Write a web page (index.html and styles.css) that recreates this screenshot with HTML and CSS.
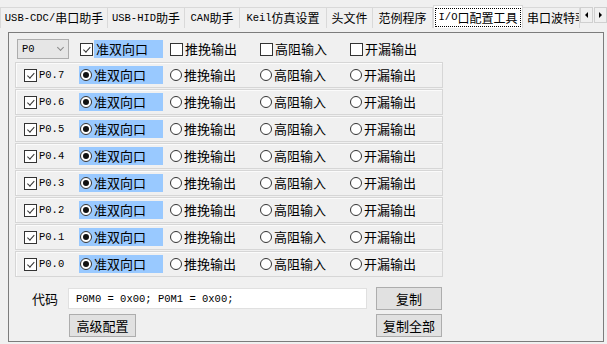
FILE: index.html
```html
<!DOCTYPE html>
<html lang="zh">
<head>
<meta charset="utf-8">
<link rel="stylesheet" href="styles.css">
</head>
<body>
<div class="tabbar">
  <div class="tabs">
    <div class="tab t1"><span class="lat">USB-CDC/</span>串口助手</div>
    <div class="tab t2"><span class="lat">USB-HID</span>助手</div>
    <div class="tab t3"><span class="lat">CAN</span>助手</div>
    <div class="tab t4"><span class="lat">Keil</span>仿真设置</div>
    <div class="tab t5">头文件</div>
    <div class="tab t6">范例程序</div>
    <div class="tab t7 active"><span class="focus"><span class="lat">I/O</span>口配置工具</span></div>
    <div class="tab t8">串口波特率</div>
  </div>
  <div class="scroll">
    <span class="sbtn"><span class="tri-l"></span></span>
    <span class="sbtn"><span class="tri-r"></span></span>
  </div>
</div>

<div class="frame">
  <div class="head grid">
    <div class="combo"><span class="lat">P0</span><span class="chev"></span></div>
    <label class="opt"><span class="cb on"></span><span class="txt hl">准双向口</span></label>
    <label class="opt"><span class="cb"></span><span class="txt">推挽输出</span></label>
    <label class="opt"><span class="cb"></span><span class="txt">高阻输入</span></label>
    <label class="opt"><span class="cb"></span><span class="txt">开漏输出</span></label>
  </div>

  <div class="rows">
    <div class="row grid2">
      <label class="opt"><span class="cb on"></span><span class="lat pin">P0.7</span></label>
      <label class="opt hlbox"><span class="rb on"></span><span class="txt">准双向口</span></label>
      <label class="opt"><span class="rb"></span><span class="txt">推挽输出</span></label>
      <label class="opt"><span class="rb"></span><span class="txt">高阻输入</span></label>
      <label class="opt"><span class="rb"></span><span class="txt">开漏输出</span></label>
    </div>
    <div class="row grid2">
      <label class="opt"><span class="cb on"></span><span class="lat pin">P0.6</span></label>
      <label class="opt hlbox"><span class="rb on"></span><span class="txt">准双向口</span></label>
      <label class="opt"><span class="rb"></span><span class="txt">推挽输出</span></label>
      <label class="opt"><span class="rb"></span><span class="txt">高阻输入</span></label>
      <label class="opt"><span class="rb"></span><span class="txt">开漏输出</span></label>
    </div>
    <div class="row grid2">
      <label class="opt"><span class="cb on"></span><span class="lat pin">P0.5</span></label>
      <label class="opt hlbox"><span class="rb on"></span><span class="txt">准双向口</span></label>
      <label class="opt"><span class="rb"></span><span class="txt">推挽输出</span></label>
      <label class="opt"><span class="rb"></span><span class="txt">高阻输入</span></label>
      <label class="opt"><span class="rb"></span><span class="txt">开漏输出</span></label>
    </div>
    <div class="row grid2">
      <label class="opt"><span class="cb on"></span><span class="lat pin">P0.4</span></label>
      <label class="opt hlbox"><span class="rb on"></span><span class="txt">准双向口</span></label>
      <label class="opt"><span class="rb"></span><span class="txt">推挽输出</span></label>
      <label class="opt"><span class="rb"></span><span class="txt">高阻输入</span></label>
      <label class="opt"><span class="rb"></span><span class="txt">开漏输出</span></label>
    </div>
    <div class="row grid2">
      <label class="opt"><span class="cb on"></span><span class="lat pin">P0.3</span></label>
      <label class="opt hlbox"><span class="rb on"></span><span class="txt">准双向口</span></label>
      <label class="opt"><span class="rb"></span><span class="txt">推挽输出</span></label>
      <label class="opt"><span class="rb"></span><span class="txt">高阻输入</span></label>
      <label class="opt"><span class="rb"></span><span class="txt">开漏输出</span></label>
    </div>
    <div class="row grid2">
      <label class="opt"><span class="cb on"></span><span class="lat pin">P0.2</span></label>
      <label class="opt hlbox"><span class="rb on"></span><span class="txt">准双向口</span></label>
      <label class="opt"><span class="rb"></span><span class="txt">推挽输出</span></label>
      <label class="opt"><span class="rb"></span><span class="txt">高阻输入</span></label>
      <label class="opt"><span class="rb"></span><span class="txt">开漏输出</span></label>
    </div>
    <div class="row grid2">
      <label class="opt"><span class="cb on"></span><span class="lat pin">P0.1</span></label>
      <label class="opt hlbox"><span class="rb on"></span><span class="txt">准双向口</span></label>
      <label class="opt"><span class="rb"></span><span class="txt">推挽输出</span></label>
      <label class="opt"><span class="rb"></span><span class="txt">高阻输入</span></label>
      <label class="opt"><span class="rb"></span><span class="txt">开漏输出</span></label>
    </div>
    <div class="row grid2">
      <label class="opt"><span class="cb on"></span><span class="lat pin">P0.0</span></label>
      <label class="opt hlbox"><span class="rb on"></span><span class="txt">准双向口</span></label>
      <label class="opt"><span class="rb"></span><span class="txt">推挽输出</span></label>
      <label class="opt"><span class="rb"></span><span class="txt">高阻输入</span></label>
      <label class="opt"><span class="rb"></span><span class="txt">开漏输出</span></label>
    </div>
  </div>

  <div class="bottom">
    <div class="lbl">代码</div>
    <div class="code"><span class="lat">P0M0 = 0x00; P0M1 = 0x00;</span></div>
    <button class="btn">复制</button>
    <button class="btn adv">高级配置</button>
    <button class="btn all">复制全部</button>
  </div>
</div>
</body>
</html>
```

FILE: styles.css
```css
html, body {
  margin: 0;
  padding: 0;
  background: #f0f0f0;
}
body {
  width: 607px;
  height: 344px;
  overflow: hidden;
  font-family: "Noto Sans CJK SC", "Noto Sans", sans-serif;
  font-size: 13px;
  color: #000;
}
.lat {
  font-family: "Liberation Mono", "DejaVu Sans Mono", monospace;
  font-size: 10.5px;
}

/* tab strip */
.tabbar {
  display: flex;
  height: 28px;
}
.tabs {
  display: flex;
  align-items: flex-end;
  width: 580px;
  overflow: hidden;
  white-space: nowrap;
}
.tab {
  box-sizing: border-box;
  height: 21px;
  flex: none;
  display: flex;
  align-items: center;
  justify-content: center;
  font-size: 12px;
  line-height: 1;
  background: #f0f0f0;
  border-top: 1px solid #d9d9d9;
  border-right: 1px solid #d9d9d9;
}
.t1 { width: 108px; border-left: 1px solid #d9d9d9; }
.t2 { width: 77px; }
.t3 { width: 55px; }
.t4 { width: 87px; }
.t5 { width: 46px; }
.t6 { width: 60px; }
.t7 { width: 90px; }
.t8 { width: 57px; justify-content: flex-start; padding-left: 4px; overflow: hidden; }
.tab.active {
  height: 23px;
  background: #fff;
  border: 1px solid #d9d9d9;
  border-bottom: none;
}
.focus {
  box-sizing: border-box;
  width: 86px;
  height: 19px;
  border: 1px dotted #000;
  display: flex;
  align-items: center;
  justify-content: center;
  margin-top: 1px;
}
.scroll {
  display: flex;
  gap: 1px;
  margin-top: 7px;
  height: 16px;
}
.sbtn {
  box-sizing: border-box;
  width: 13px;
  height: 16px;
  background: #f0f0f0;
  border: 1px solid #d0d0d0;
  display: flex;
  align-items: center;
  justify-content: center;
}
.tri-l, .tri-r {
  width: 0;
  height: 0;
  border-top: 3px solid transparent;
  border-bottom: 3px solid transparent;
}
.tri-l { border-right: 3px solid #000; }
.tri-r { border-left: 3px solid #000; }

/* frame */
.frame {
  box-sizing: border-box;
  margin: 4px 0 0 8px;
  width: 596px;
  height: 310px;
  border: 1px solid #7c7c7c;
  padding-top: 6px;
}
.grid {
  display: grid;
  grid-template-columns: 63px 90px 90px 90px 90px;
  align-items: center;
  height: 20px;
  margin-left: 8px;
}
.combo {
  box-sizing: border-box;
  width: 52px;
  height: 20px;
  background: #e6e6e6;
  border: 1px solid #adadad;
  display: flex;
  align-items: center;
  justify-content: space-between;
  padding: 0 5px 0 4px;
}
.chev {
  width: 4px;
  height: 4px;
  border-right: 1px solid #8a8a8a;
  border-bottom: 1px solid #8a8a8a;
  transform: rotate(45deg);
  margin-top: -3px;
}
.opt {
  display: flex;
  align-items: center;
  height: 18px;
}
.txt {
  line-height: 18px;
  padding-left: 2px;
}
.hl {
  background: #99c9ff;
  padding: 0 2px 0 2px;
  width: 65px;
  margin-left: 1px;
}
.cb {
  box-sizing: border-box;
  width: 13px;
  height: 13px;
  border: 1px solid #333;
  background: #fff;
  flex: none;
  position: relative;
}
.cb.on::after {
  content: "";
  position: absolute;
  width: 6px;
  height: 3px;
  border-left: 1.3px solid #333;
  border-bottom: 1.3px solid #333;
  transform: rotate(-48deg);
  transform-origin: 0 0;
  top: 6px;
  left: 2px;
}
.rb {
  box-sizing: border-box;
  width: 12px;
  height: 12px;
  border: 1px solid #333;
  border-radius: 50%;
  background: #fff;
  flex: none;
  display: flex;
  align-items: center;
  justify-content: center;
}
.rb.on {
  border-width: 1.5px;
}
.rb.on::after {
  content: "";
  width: 6px;
  height: 6px;
  border-radius: 50%;
  background: #111;
}

/* rows */
.rows {
  display: flex;
  flex-direction: column;
  gap: 1px;
  margin-top: 3px;
  margin-left: 6px;
}
.row {
  box-sizing: border-box;
  width: 428px;
  height: 26px;
  border: 1px solid #d6d6d6;
  box-shadow: inset 1px 1px 0 #fbfbfb;
  padding-left: 8px;
}
.grid2 {
  display: grid;
  grid-template-columns: 56px 90px 90px 90px 90px;
  align-items: center;
}
.pin {
  padding-left: 2px;
}
.hlbox {
  background: #99c9ff;
  width: 84px;
  margin-left: -1px;
  padding-left: 1px;
  box-sizing: border-box;
}

/* bottom */
.bottom {
  display: grid;
  grid-template-columns: 50px 299px 66px;
  grid-template-rows: 23px 23px;
  column-gap: 9px;
  row-gap: 4px;
  margin-top: 10px;
}
.lbl {
  text-align: right;
  padding-right: 1px;
  align-self: center;
  line-height: 18px;
}
.code {
  box-sizing: border-box;
  height: 21px;
  align-self: center;
  background: #fff;
  border: 1px solid #e0e0e0;
  display: flex;
  align-items: center;
  padding-left: 7px;
}
.btn {
  box-sizing: border-box;
  width: 66px;
  height: 23px;
  margin: 0;
  padding: 0;
  background: #e1e1e1;
  border: 1px solid #adadad;
  font-family: "Noto Sans CJK SC", sans-serif;
  font-size: 13px;
  color: #000;
  line-height: 1;
}
.adv {
  grid-column: 2;
  grid-row: 2;
  width: 67px;
  margin-left: 1px;
}
.all {
  grid-column: 3;
  grid-row: 2;
}
```
